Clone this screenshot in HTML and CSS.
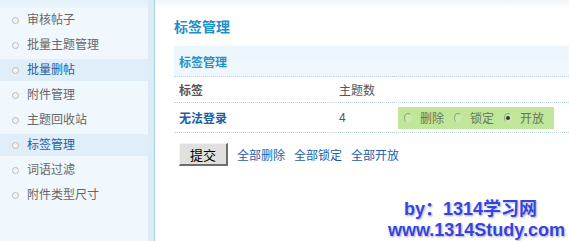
FILE: index.html
```html
<!DOCTYPE html>
<html lang="zh-CN">
<head>
	<meta charset="UTF-8">
	<title>标签管理</title>
	<link rel="stylesheet" href="styles.css">
</head>
<body>
	<div class="sidebar">
		<ul class="menu">
			<li>审核帖子</li>
			<li>批量主题管理</li>
			<li class="on">批量删帖</li>
			<li>附件管理</li>
			<li>主题回收站</li>
			<li class="on">标签管理</li>
			<li>词语过滤</li>
			<li>附件类型尺寸</li>
		</ul>
	</div>

	<div class="main">
		<h3 class="title">标签管理</h3>
		<table class="tags">
			<tr class="head">
				<td colspan="3">标签管理</td>
			</tr>
			<tr class="cols">
				<td class="c1"><b>标签</b></td>
				<td class="c2">主题数</td>
				<td></td>
			</tr>
			<tr class="row">
				<td class="c1"><a href="#" class="tag">无法登录</a></td>
				<td class="c2">4</td>
				<td>
					<div class="choice">
						<span class="radio"></span><span class="lbl">删除</span>
						<span class="radio"></span><span class="lbl">锁定</span>
						<span class="radio checked"></span><span class="lbl">开放</span>
					</div>
				</td>
			</tr>
		</table>

		<div class="actions">
			<button class="btn">提交</button>
			<a href="#">全部删除</a>
			<a href="#">全部锁定</a>
			<a href="#">全部开放</a>
		</div>

		<div class="mark">
			<p>by：1314学习网</p>
			<p>www.1314Study.com</p>
		</div>
	</div>
</body>
</html>
```

FILE: styles.css
```css
body{
	margin: 0;
	font: 12px "Liberation Sans", "Noto Sans CJK SC", sans-serif;
	display: flex;
	min-height: 241px;
	overflow: hidden;
}

.sidebar{
	flex: 0 0 148px;
	background: linear-gradient(#e5f0f9 0, #e9f3fa 8px, #f1f8fd 8px);
	border-right: 6px solid #dcecf7;
}

.menu{
	list-style: none;
	margin: 0;
	padding: 9px 0 0 0;
}

.menu li{
	position: relative;
	height: 22px;
	line-height: 22px;
	margin-bottom: 3px;
	padding-left: 27px;
	color: #666;
}

.menu li::before{
	content: "";
	position: absolute;
	left: 12px;
	top: 8px;
	width: 5px;
	height: 5px;
	border: 1px solid #bbb;
	border-radius: 50%;
	background: #f4f4f4;
}

.menu li.on{
	background: #e0eef9;
	color: #1d5ea4;
}

.main{
	flex: 1;
	min-width: 0;
	position: relative;
	border-left: 1px solid #a9d0e4;
	background: linear-gradient(#edf5fb 0, #fff 8px);
	padding: 18px 0 0 19px;
}

.title{
	margin: 0;
	font-size: 14px;
	line-height: 18px;
	color: #1a90c8;
}

.tags{
	width: 100%;
	margin-top: 10px;
	border-collapse: collapse;
}

.tags td{
	padding: 0 5px;
	border-bottom: 1px dotted #bcd9ec;
	white-space: nowrap;
}

.head td{
	height: 30px;
	background: linear-gradient(#eef6fd 0, #eef6fd 50%, #f0f7fc 50%);
	font-weight: bold;
	color: #1994c9;
}

.cols td{
	height: 25px;
	color: #555;
}

.row td{
	height: 29px;
}

.c1{
	width: 150px;
}

.c2{
	width: 49px;
	color: #555;
}

.tag{
	color: #1d5ea4;
	font-weight: bold;
	text-decoration: none;
}

.choice{
	display: inline-flex;
	align-items: center;
	width: 150px;
	height: 22px;
	padding-left: 6px;
	background: #c0e69a;
	color: #667755;
}

.radio{
	width: 8px;
	height: 8px;
	border: 1px solid;
	border-color: #8ea676 #cde4b6 #cde4b6 #8ea676;
	border-radius: 50%;
	background: #cbe9ad;
	margin-right: 8px;
	display: flex;
	align-items: center;
	justify-content: center;
}

.radio.checked::after{
	content: "";
	width: 4px;
	height: 4px;
	border-radius: 50%;
	background: #2f3a28;
}

.lbl{
	margin-right: 10px;
}

.actions{
	display: flex;
	align-items: center;
	gap: 9px;
	margin-top: 10px;
	padding-left: 5px;
}

.actions a{
	color: #1d5ea4;
	text-decoration: none;
}

.btn{
	width: 49px;
	height: 23px;
	padding: 0;
	font: 13px "Liberation Sans", "Noto Sans CJK SC", sans-serif;
	color: #000;
	background: #e0e0e0;
	border: 1px solid;
	border-color: #f4f4f4 #6e6e6e #6e6e6e #f4f4f4;
	border-width: 1px 2px 2px 1px;
}

.mark{
	position: absolute;
	right: 4px;
	bottom: 0;
	text-align: right;
	font: bold 18px "Liberation Sans", "Noto Sans CJK SC", sans-serif;
	color: #3444de;
	text-shadow: 0 0 2px #fff, 1px 1px 2px #9a9ab8;
}

.mark p{
	margin: 0;
	line-height: 21px;
}

.mark p:first-child{
	margin-right: 28px;
}
```
